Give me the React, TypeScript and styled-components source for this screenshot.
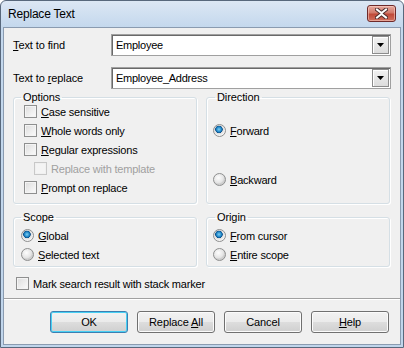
import styled, { createGlobalStyle } from 'styled-components'

const GlobalStyle = createGlobalStyle`
  html, body {
    margin: 0;
    padding: 0;
    background: #ffffff;
  }
  body {
    font-family: "Liberation Sans", Arial, sans-serif;
    font-size: 11px;
    color: #000;
  }
`

const Key = styled.u`
  text-decoration: underline;
  text-underline-offset: 1px;
`

const CloseIcon = () => (
  <svg width="13" height="11" viewBox="0 0 13 11">
    <path
      d="M2 1.5 L6.5 5 L11 1.5 M2 9.5 L6.5 6 L11 9.5"
      stroke="#4a2b2b"
      strokeWidth="4"
      strokeLinecap="square"
      fill="none"
    />
    <path
      d="M2 1.5 L6.5 5 L11 1.5 M2 9.5 L6.5 6 L11 9.5"
      stroke="#ffffff"
      strokeWidth="2"
      strokeLinecap="square"
      fill="none"
    />
  </svg>
)

const ComboArrow = () => (
  <svg width="7" height="4" viewBox="0 0 7 4">
    <path d="M0 0 H7 L3.5 4 Z" fill="#000" />
  </svg>
)

type CheckProps = { label: React.ReactNode; disabled?: boolean; indent?: number }

const CheckBox = ({ label, disabled, indent = 0 }: CheckProps) => (
  <Control $indent={indent} $disabled={disabled}>
    <CheckSquare $disabled={disabled} />
    <span>{label}</span>
  </Control>
)

type RadioProps = { label: React.ReactNode; checked?: boolean }

const Radio = ({ label, checked }: RadioProps) => (
  <Control $indent={0}>
    <RadioDot $checked={checked} />
    <span>{label}</span>
  </Control>
)

export default function App() {
  return (
    <>
      <GlobalStyle />
      <Window>
        <TitleBar>
          <Title>Replace Text</Title>
          <CloseButton>
            <CloseIcon />
          </CloseButton>
        </TitleBar>
        <Client>
          <Fields>
            <FieldRow>
              <FieldLabel>
                <Key>T</Key>ext to find
              </FieldLabel>
              <Combo>
                <ComboText>Employee</ComboText>
                <ComboButton>
                  <ComboArrow />
                </ComboButton>
              </Combo>
            </FieldRow>
            <FieldRow>
              <FieldLabel>
                Text to <Key>r</Key>eplace
              </FieldLabel>
              <Combo>
                <ComboText>Employee_Address</ComboText>
                <ComboButton>
                  <ComboArrow />
                </ComboButton>
              </Combo>
            </FieldRow>
          </Fields>

          <Groups>
            <Group $height={113}>
              <Legend>Options</Legend>
              <GroupBody $pad={10} $gap={0} $top={-2}>
                <CheckBox label={<><Key>C</Key>ase sensitive</>} />
                <CheckBox label={<><Key>W</Key>hole words only</>} />
                <CheckBox label={<><Key>R</Key>egular expressions</>} />
                <CheckBox label="Replace with template" disabled indent={10} />
                <CheckBox label={<><Key>P</Key>rompt on replace</>} />
              </GroupBody>
            </Group>
            <Group $height={113}>
              <Legend $shift={8}>Direction</Legend>
              <GroupBody $pad={6} $gap={30} $top={17}>
                <Radio checked label={<><Key>F</Key>orward</>} />
                <Radio label={<><Key>B</Key>ackward</>} />
              </GroupBody>
            </Group>
            <Group $height={56}>
              <Legend>Scope</Legend>
              <GroupBody $pad={7} $gap={0} $top={2}>
                <Radio checked label={<><Key>G</Key>lobal</>} />
                <Radio label={<><Key>S</Key>elected text</>} />
              </GroupBody>
            </Group>
            <Group $height={56}>
              <Legend $shift={8}>Origin</Legend>
              <GroupBody $pad={6} $gap={0} $top={2}>
                <Radio checked label={<><Key>F</Key>rom cursor</>} />
                <Radio label={<><Key>E</Key>ntire scope</>} />
              </GroupBody>
            </Group>
          </Groups>

          <MarkRow>
            <CheckBox label="Mark search result with stack marker" />
          </MarkRow>

          <Separator />

          <ButtonRow>
            <Button $default>
              <span>OK</span>
            </Button>
            <Button>
              <span>
                Replace <Key>A</Key>ll
              </span>
            </Button>
            <Button>
              <span>Cancel</span>
            </Button>
            <Button>
              <span>
                <Key>H</Key>elp
              </span>
            </Button>
          </ButtonRow>
        </Client>
      </Window>
    </>
  )
}

const Window = styled.div`
  width: 404px;
  height: 348px;
  box-sizing: border-box;
  display: flex;
  flex-direction: column;
  border: 1px solid #58687c;
  border-radius: 6px 6px 0 0;
  background: linear-gradient(#dce7f4, #c4d8ed 26px, #c0d5eb);
  padding: 0 2px 2px;
`

const TitleBar = styled.div`
  height: 26px;
  display: flex;
  align-items: center;
  justify-content: space-between;
  padding: 0 5px 0 5px;
`

const Title = styled.div`
  font-family: "Liberation Sans", Arial, sans-serif;
  font-size: 12px;
  letter-spacing: -0.2px;
  color: #000;
  margin-top: -1px;
`

const CloseButton = styled.div`
  width: 29px;
  height: 17px;
  box-sizing: border-box;
  margin-top: -2px;
  border: 1px solid #6e2a2a;
  border-radius: 3px;
  background: linear-gradient(#e6a99e, #d27a6b 45%, #c04a39 55%, #d0705e);
  box-shadow: inset 0 0 0 1px rgba(255, 220, 210, 0.5);
  display: flex;
  align-items: center;
  justify-content: center;
`

const Client = styled.div`
  flex: 1;
  background: #f0f0f0;
  border: 1px solid #8a9bb0;
  display: flex;
  flex-direction: column;
  padding: 6px 9px 0 8px;
`

const Fields = styled.div`
  display: flex;
  flex-direction: column;
  gap: 11px;
`

const FieldRow = styled.div`
  display: flex;
  align-items: center;
`

const FieldLabel = styled.div`
  width: 98px;
  padding-left: 1px;
  letter-spacing: -0.1px;
`

const Combo = styled.div`
  flex: 1;
  height: 22px;
  box-sizing: border-box;
  background: #fff;
  border: 1px solid #a0a0a0;
  box-shadow: inset 1px 1px 0 #696969;
  display: flex;
  align-items: center;
  padding: 2px 1px 2px 4px;
`

const ComboText = styled.div`
  flex: 1;
  font-size: 11px;
  letter-spacing: -0.25px;
`

const ComboButton = styled.div`
  width: 17px;
  height: 18px;
  box-sizing: border-box;
  border: 1px solid #8c8c8c;
  background: linear-gradient(#f2f2f2, #dcdcdc);
  box-shadow: inset 1px 1px 0 #fff;
  display: flex;
  align-items: center;
  justify-content: center;
`

const Groups = styled.div`
  display: grid;
  grid-template-columns: 184px 184px;
  column-gap: 9px;
  row-gap: 7px;
  margin-top: 2px;
  padding-left: 1px;
`

const Group = styled.fieldset<{ $height: number }>`
  margin: 0;
  padding: 0;
  height: ${(p) => p.$height}px;
  box-sizing: border-box;
  border: 1px solid #d5dfe5;
  border-radius: 3px;
  box-shadow: inset 1px 1px 0 #fff, 1px 1px 0 #fff;
  min-width: 0;
`

const Legend = styled.legend<{ $shift?: number }>`
  margin-left: ${(p) => p.$shift ?? 7}px;
  padding: 0 2px;
  line-height: 13px;
  letter-spacing: -0.1px;
`

const GroupBody = styled.div<{ $pad: number; $gap: number; $top: number }>`
  display: flex;
  flex-direction: column;
  gap: ${(p) => p.$gap}px;
  padding-left: ${(p) => p.$pad}px;
  margin-top: ${(p) => p.$top}px;
`

const Control = styled.div<{ $indent: number; $disabled?: boolean }>`
  height: 19px;
  display: flex;
  align-items: center;
  gap: 4px;
  padding-left: ${(p) => p.$indent}px;
  color: ${(p) => (p.$disabled ? '#a0a0a0' : '#000')};
  letter-spacing: -0.2px;
  white-space: nowrap;
`

const CheckSquare = styled.span<{ $disabled?: boolean }>`
  width: 13px;
  height: 13px;
  box-sizing: border-box;
  flex: none;
  border: 1px solid ${(p) => (p.$disabled ? '#c8c8c8' : '#8e8f8f')};
  background: ${(p) =>
    p.$disabled
      ? '#f4f4f4'
      : 'linear-gradient(135deg, #dcdcdc, #f6f6f6 80%)'};
  box-shadow: inset 0 0 0 1px ${(p) => (p.$disabled ? '#f0f0f0' : '#f4f4f4')};
`

const RadioDot = styled.span<{ $checked?: boolean }>`
  width: 13px;
  height: 13px;
  box-sizing: border-box;
  flex: none;
  border-radius: 50%;
  border: 1px solid #8e8f8f;
  background: ${(p) =>
    p.$checked
      ? 'radial-gradient(circle at 45% 40%, #7fd0f5 0, #1f86c6 2.5px, #0c4f8a 3.5px, #dcdcdc 4px, #f4f4f4 6px)'
      : 'radial-gradient(circle at 40% 35%, #fdfdfd 0, #e4e4e4 5px, #cfcfcf 6px)'};
`

const MarkRow = styled.div`
  padding-left: 4px;
  margin-top: 7px;
`

const Separator = styled.div`
  margin: 5px -9px 0 -8px;
  height: 1px;
  background: #a0a0a0;
  border-bottom: 1px solid #ffffff;
`

const ButtonRow = styled.div`
  display: flex;
  justify-content: flex-end;
  gap: 9px;
  padding-right: 2px;
  margin-top: 11px;
`

const Button = styled.div<{ $default?: boolean }>`
  width: 78px;
  height: 22px;
  box-sizing: border-box;
  border: 1px solid ${(p) => (p.$default ? '#3c7fb1' : '#707070')};
  border-radius: 3px;
  background: linear-gradient(#f2f2f2, #ebebeb 48%, #dddddd 52%, #cfcfcf);
  box-shadow: ${(p) =>
    p.$default ? 'inset 0 0 0 1px #48d0f4' : 'inset 0 0 0 1px #fbfbfb'};
  display: flex;
  align-items: center;
  justify-content: center;
  letter-spacing: -0.1px;
`
